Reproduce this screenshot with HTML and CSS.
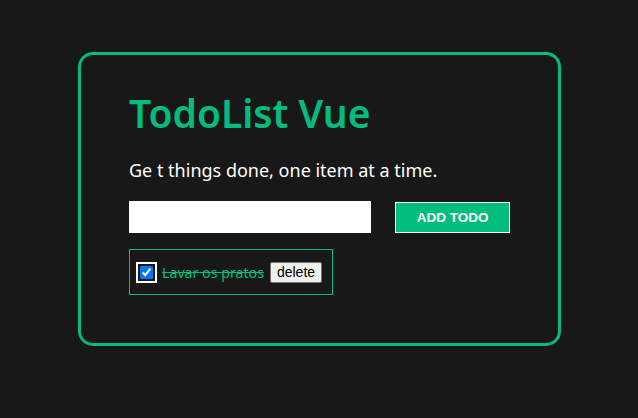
FILE: index.html
```html
<!DOCTYPE html>
<html>
<head>
<meta charset="utf-8">
<link rel="stylesheet" href="styles.css">
</head>
<body>
<div class="card">
  <h1 class="title">TodoList Vue</h1>
  <p class="subtitle">Ge t things done, one item at a time.</p>
  <form class="add-form">
    <input class="add-input" type="text">
    <button class="add-btn" type="button">ADD TODO</button>
  </form>
  <ul class="todos">
    <li class="todo">
      <input class="todo-check" type="checkbox" checked>
      <span class="todo-text done">Lavar os pratos</span>
      <button class="todo-del" type="button">delete</button>
    </li>
  </ul>
</div>
</body>
</html>
```
FILE: styles.css
```css
html, body {
  margin: 0;
  padding: 0;
  background: #181818;
  height: 100%;
}
body {
  font-family: "Noto Sans", "Open Sans", sans-serif;
  color: #fff;
  padding-top: 52px;
  box-sizing: border-box;
}
.card {
  margin-left: 78px;
  width: 483px;
  height: 294px;
  box-sizing: border-box;
  border: 3px solid #00bd7e;
  border-radius: 15px;
  padding: 30px 48px 0 48px;
}
.title {
  margin: 0;
  font-size: 39px;
  font-weight: 600;
  color: #00bd7e;
  line-height: 56px;
}
.subtitle {
  margin: 16px 0 0 0;
  font-size: 18px;
  line-height: 26px;
}
.add-form {
  display: flex;
  gap: 24px;
  margin-top: 18px;
}
.add-input {
  width: 243px;
  height: 32px;
  box-sizing: border-box;
  border: none;
  margin: 0;
  background: #fff;
}
.add-btn {
  width: 115px;
  height: 31px;
  box-sizing: border-box;
  background: #00bd7e;
  border: 1px solid #fff;
  color: #fff;
  font-family: "Liberation Sans", Arial, sans-serif;
  font-weight: bold;
  font-size: 13.5px;
  margin: 1px 0 0 0;
  padding: 0;
}
.todos {
  list-style: none;
  margin: 16px 0 0 0;
  padding: 0;
  display: flex;
}
.todo {
  display: flex;
  align-items: center;
  border: 1px solid #00bd7e;
  padding: 0 10px 0 10px;
  height: 46px;
  box-sizing: border-box;
}
.todo-check {
  width: 13px;
  height: 13px;
  margin: 0 9px 0 0;
  accent-color: #0075ff;
  outline: 2px solid #fff;
  outline-offset: 2px;
  border-radius: 3px;
}
.todo-text {
  font-size: 14.2px;
  color: #00bd7e;
  text-decoration: line-through;
}
.todo-del {
  margin-left: 6px;
  font-family: "Liberation Sans", Arial, sans-serif;
  font-size: 14px;
  height: 21px;
  padding: 0 6px;
  background: #efefef;
  border: 1px solid #767676;
  border-radius: 2px;
  color: #000;
}
```
